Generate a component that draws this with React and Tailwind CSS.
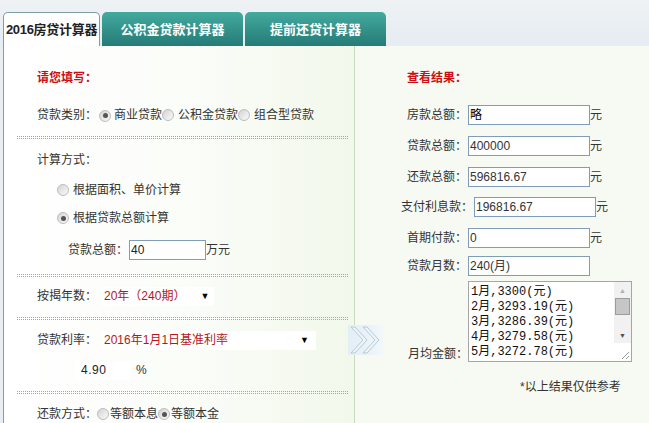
import React from "react";

function Radio({ checked }) {
  return (
    <span className="inline-flex w-[12px] h-[12px] shrink-0 items-center justify-center rounded-full border border-[#bdbdbd] bg-gradient-to-br from-[#d4d4d4] to-[#fafafa]">
      {checked && <span className="w-[5px] h-[5px] rounded-full bg-[#555]" />}
    </span>
  );
}

function Dotted() {
  return <div className="ml-[13px] mr-[6px] h-[3px] border-y border-dotted border-[#7fb5b8]" />;
}

function ResultRow({ label, value, mt, pl = "pl-[52px]", unit = true }) {
  return (
    <div className={`flex h-[20px] items-center ${mt} ${pl}`}>
      <span>{label}</span>
      <div className="ml-[1px] flex h-[20px] w-[122px] items-center border border-[#7f9db9] bg-white pl-[1px] text-[#333]">
        {value}
      </div>
      {unit && <span>元</span>}
    </div>
  );
}

export default function App() {
  const lines = ["1月,3300(元)", "2月,3293.19(元)", "3月,3286.39(元)", "4月,3279.58(元)", "5月,3272.78(元)"];
  return (
    <div className="w-[649px] h-[423px] overflow-hidden bg-[#e9eef2] text-[12px] leading-none text-[#333] font-['Liberation_Sans','Noto_Sans_CJK_SC',sans-serif]">
      {/* Tabs */}
      <div className="flex h-[46px] items-end pl-[3px] bg-gradient-to-b from-[#eef2f5] to-[#e6ecf1]">
        <div className="flex h-[34px] w-[97px] items-center justify-center rounded-t-[5px] border border-b-0 border-[#7f9cab] bg-white text-[13px] font-bold text-[#222] tracking-[-0.3px]">
          2016房贷计算器
        </div>
        <div className="ml-[2px] flex h-[34px] w-[141px] items-center justify-center rounded-t-[5px] bg-gradient-to-b from-[#43aa9e] to-[#257b77] text-[13px] font-bold text-white">
          公积金贷款计算器
        </div>
        <div className="ml-[2px] flex h-[34px] w-[141px] items-center justify-center rounded-t-[5px] bg-gradient-to-b from-[#43aa9e] to-[#257b77] text-[13px] font-bold text-white">
          提前还贷计算器
        </div>
      </div>

      {/* Content */}
      <div className="relative flex h-[377px]">
        {/* Left panel */}
        <div className="ml-[3px] w-[351px] border-l border-[#7f9cab] bg-gradient-to-r from-white via-[#fbfdf9] to-[#f2f8eb]">
          <div className="mt-[22px] flex h-[20px] items-center pl-[33px] font-bold text-[#cc0f14]">请您填写：</div>

          <div className="mt-[17px] flex h-[20px] items-center pl-[33px]">
            <span>贷款类别：</span>
            <span className="ml-[2px]"><Radio checked /></span>
            <span className="ml-[3px]">商业贷款</span>
            <Radio />
            <span className="ml-[4px]">公积金贷款</span>
            <Radio />
            <span className="ml-[4px]">组合型贷款</span>
          </div>

          <div className="mt-[11px]"><Dotted /></div>

          <div className="mt-[11px] flex h-[20px] items-center pl-[33px]">计算方式：</div>

          <div className="mt-[10px] flex h-[20px] items-center pl-[53px]">
            <Radio />
            <span className="ml-[4px]">根据面积、单价计算</span>
          </div>
          <div className="mt-[8px] flex h-[20px] items-center pl-[53px]">
            <Radio checked />
            <span className="ml-[4px]">根据贷款总额计算</span>
          </div>

          <div className="mt-[12px] flex h-[20px] items-center pl-[64px]">
            <span>贷款总额：</span>
            <div className="ml-[1px] flex h-[20px] w-[77px] items-center border border-[#7f9db9] bg-white pl-[1px] text-[#222]">40</div>
            <span>万元</span>
          </div>

          <div className="mt-[14px]"><Dotted /></div>

          <div className="mt-[9px] flex h-[20px] items-center pl-[33px]">
            <span>按揭年数：</span>
            <div className="ml-[4px] flex h-[19px] w-[113px] items-center bg-white pl-[3px] text-[#b5161c]">
              <span>20年（240期）</span>
              <span className="ml-[15px] text-[9px] text-black">▼</span>
            </div>
          </div>

          <div className="mt-[11px]"><Dotted /></div>

          <div className="mt-[10px] flex h-[20px] items-center pl-[33px]">
            <span>贷款利率：</span>
            <div className="ml-[4px] flex h-[19px] w-[215px] items-center justify-between bg-white pl-[3px] pr-[7px] text-[#b5161c]">
              <span>2016年1月1日基准利率</span>
              <span className="text-[9px] text-black">▼</span>
            </div>
          </div>

          <div className="mt-[10px] flex h-[20px] items-center pl-[71px]">
            <div className="flex h-[19px] w-[56px] items-center bg-white pl-[6px] tracking-[0.5px] text-[#222]">4.90</div>
            <span className="ml-[5px]">%</span>
          </div>

          <div className="mt-[11px]"><Dotted /></div>

          <div className="mt-[10px] flex h-[20px] items-center pl-[33px]">
            <span>还款方式：</span>
            <Radio />
            <span className="ml-[1px]">等额本息</span>
            <Radio checked />
            <span className="ml-[1px]">等额本金</span>
          </div>
        </div>

        {/* Divider */}
        <div className="w-px bg-[#c9dcbd]" />

        {/* Right panel */}
        <div className="flex-1 bg-[#f7faf2]">
          <div className="mt-[22px] flex h-[20px] items-center pl-[52px] font-bold text-[#cc0f14]">查看结果：</div>
          <ResultRow label="房款总额：" value={<span className="text-black">略</span>} mt="mt-[17px]" />
          <ResultRow label="贷款总额：" value="400000" mt="mt-[11px]" />
          <ResultRow label="还款总额：" value="596816.67" mt="mt-[11px]" />
          <ResultRow label="支付利息款：" value="196816.67" mt="mt-[10px]" pl="pl-[46px]" />
          <ResultRow label="首期付款：" value="0" mt="mt-[11px]" />
          <ResultRow label="贷款月数：" value="240(月)" mt="mt-[8px]" unit={false} />

          <div className="mt-[5px] flex items-end pl-[53px]">
            <span className="mb-[-2px] flex h-[20px] items-center">月均金额：</span>
            <div className="flex h-[81px] w-[164px] border border-[#a6a6a6] bg-white">
              <div className="flex-1 overflow-hidden pl-[2px] pt-[3px] font-['Liberation_Mono','Noto_Sans_CJK_SC',monospace] text-[12px] leading-[15px] text-[#111]">
                {lines.map((l) => (
                  <div key={l} className="whitespace-nowrap">{l}</div>
                ))}
              </div>
              <div className="flex w-[17px] flex-col">
                <div className="flex h-[61px] flex-col items-center bg-[#f1f1f1]">
                  <div className="flex h-[16px] items-center justify-center text-[7px] text-[#b0b0b0]">▲</div>
                  <div className="h-[17px] w-[15px] border border-[#9c9c9c] bg-[#c6c6c6]" />
                  <div className="flex-1" />
                  <div className="flex h-[16px] items-center justify-center text-[7px] text-[#505050]">▼</div>
                </div>
                <div className="relative flex-1 bg-white">
                  <svg className="absolute right-[1px] bottom-[1px]" width="9" height="9" viewBox="0 0 9 9">
                    <line x1="1" y1="8" x2="8" y2="1" stroke="#9a9a9a" strokeWidth="1" />
                    <line x1="5" y1="8" x2="8" y2="5" stroke="#9a9a9a" strokeWidth="1" />
                  </svg>
                </div>
              </div>
            </div>
          </div>

          <div className="mt-[15px] flex h-[20px] items-center pl-[165px]">*以上结果仅供参考</div>
        </div>

        {/* Chevron */}
        <div className="absolute left-[348px] top-[279px] h-[30px] w-[36px] bg-gradient-to-r from-[#e4eef5] via-[#e9f2f8] to-[#f3f8fa]">
          <svg width="36" height="30" viewBox="0 0 36 30">
            <polygon points="3,2 7,2 19,15 7,28 3,28 15,15" fill="#eef5f9" stroke="#b3cad8" strokeWidth="1" />
            <polygon points="15,2 19,2 31,15 19,28 15,28 27,15" fill="#eef5f9" stroke="#b3cad8" strokeWidth="1" />
          </svg>
        </div>
      </div>
    </div>
  );
}
